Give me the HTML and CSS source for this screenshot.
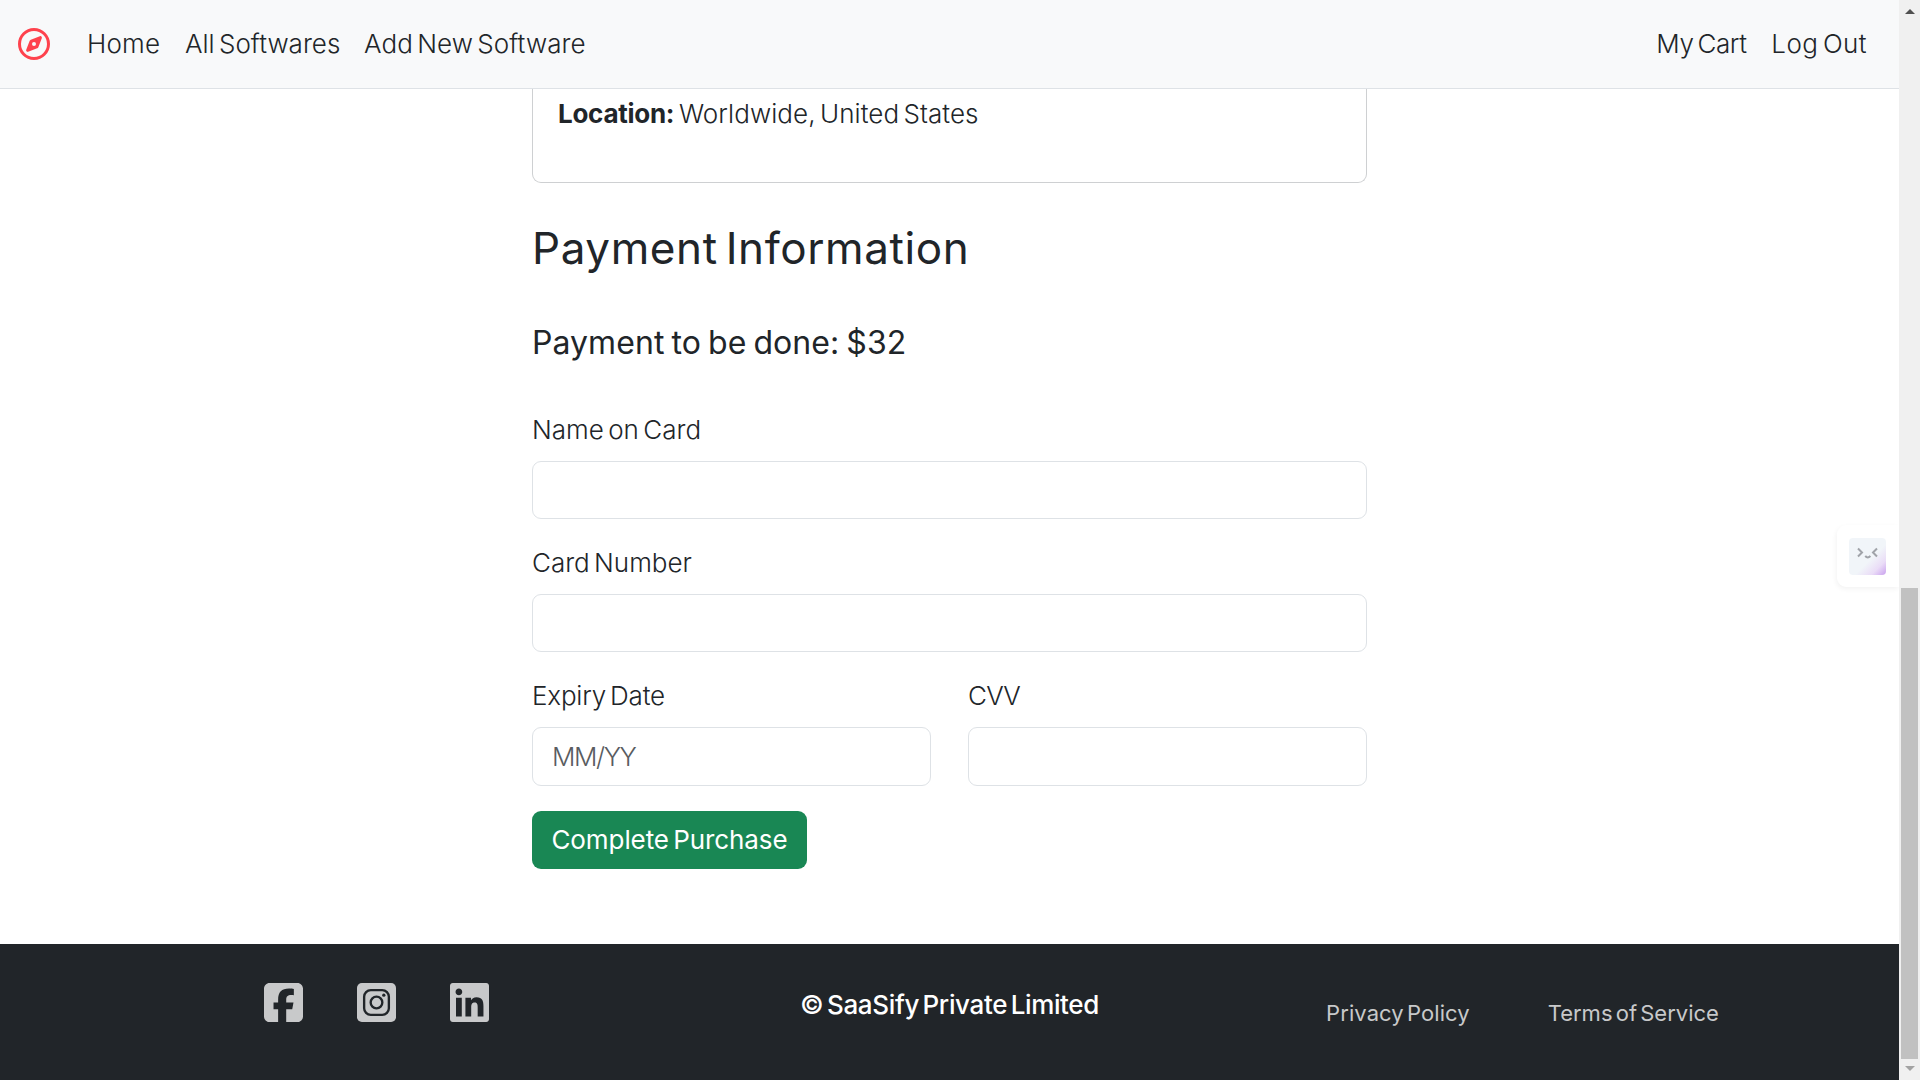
FILE: index.html
```html
<!DOCTYPE html>
<html lang="en">
<head>
<meta charset="utf-8">
<title>SaaSify</title>
<link rel="stylesheet" href="styles.css">
</head>
<body>
<div class="page">
  <header class="navbar">
    <a class="brand" aria-label="Home page">
      <svg viewBox="0 0 512 512"><path d="M464 256A208 208 0 1 0 48 256a208 208 0 1 0 416 0zM0 256a256 256 0 1 1 512 0A256 256 0 1 1 0 256zm306.7 69.1L162.4 380.6c-19.4 7.5-38.5-11.6-31-31l55.5-144.3c3.3-8.5 9.9-15.1 18.4-18.4l144.3-55.5c19.4-7.5 38.5 11.6 31 31L325.1 306.7c-3.2 8.5-9.9 15.1-18.4 18.4zM288 256a32 32 0 1 0-64 0 32 32 0 1 0 64 0z"/></svg>
    </a>
    <nav class="nav-main">
      <a class="nav-home">Home</a>
      <a class="nav-all">All Softwares</a>
      <a class="nav-add">Add New Software</a>
    </nav>
    <nav class="nav-user">
      <a class="nav-cart">My Cart</a>
      <a class="nav-logout">Log Out</a>
    </nav>
  </header>

  <main class="checkout">
    <section class="card"><b class="card-key">Location:</b><span class="card-value">Worldwide, United States</span></section>
    <h2 class="title">Payment Information</h2>
    <h4 class="amount">Payment to be done: $32</h4>
    <form class="form">
      <div class="field">
        <label class="label-name">Name on Card</label>
        <div class="input"></div>
      </div>
      <div class="field">
        <label class="label-number">Card Number</label>
        <div class="input"></div>
      </div>
      <div class="row">
        <div class="field">
          <label class="label-expiry">Expiry Date</label>
          <div class="input input-tall"><span class="placeholder">MM/YY</span></div>
        </div>
        <div class="field">
          <label class="label-cvv">CVV</label>
          <div class="input input-tall"></div>
        </div>
      </div>
      <button class="submit" type="button">Complete Purchase</button>
    </form>
  </main>

  <footer class="footer">
    <div class="social">
      <svg viewBox="0 32 448 448"><path d="M64 32C28.7 32 0 60.7 0 96V416c0 35.3 28.7 64 64 64h98.2V334.2H109.4V256h52.8V222.3c0-87.1 39.4-127.5 125-127.5c16.2 0 44.2 3.2 55.7 6.4V172c-6-.6-16.5-1-29.6-1c-42 0-58.2 15.9-58.2 57.2V256h83.6l-14.4 78.2H255V480H384c35.3 0 64-28.7 64-64V96c0-35.3-28.7-64-64-64H64z"/></svg>
      <svg viewBox="0 0 448 448"><rect width="448" height="448" rx="56"/><g class="cutout"><rect x="82" y="82" width="284" height="284" rx="76"/><circle cx="224" cy="224" r="67"/></g><circle class="cutout-dot" cx="308" cy="140" r="19"/></svg>
      <svg viewBox="0 32 448 448"><path d="M416 32H31.9C14.3 32 0 46.5 0 64.3v383.4C0 465.5 14.3 480 31.9 480H416c17.6 0 32-14.5 32-32.3V64.3c0-17.8-14.4-32.3-32-32.3zM135.4 416H69V202.2h66.5V416zm-33.2-243c-21.3 0-38.5-17.3-38.5-38.5S80.9 96 102.2 96c21.2 0 38.5 17.3 38.5 38.5 0 21.3-17.2 38.5-38.5 38.5zm282.1 243h-66.4V312c0-24.8-.5-56.7-34.5-56.7-34.6 0-39.9 27-39.9 54.9V416h-66.4V202.2h63.7v29.2h.9c8.9-16.8 30.6-34.5 62.9-34.5 67.2 0 79.7 44.3 79.7 101.9V416z"/></svg>
    </div>
    <div class="copyright">© SaaSify Private Limited</div>
    <div class="legal">
      <a class="privacy">Privacy Policy</a>
      <a class="terms">Terms of Service</a>
    </div>
  </footer>
</div>

<div class="scrollbar">
  <i class="arrow-up"></i>
  <i class="thumb"></i>
  <i class="arrow-down"></i>
</div>

<div class="assistant">
  <svg viewBox="0 0 37 37"><path d="M9 10.5l4 4-4 4M28 10.5l-4 4 4 4"/><path d="M16.2 18q2.6 2.8 5.2 0"/></svg>
</div>
</body>
</html>
```

FILE: styles.css
```css
* { box-sizing: border-box; }
body {
  margin: 0;
  width: 1920px;
  height: 1080px;
  overflow: hidden;
  display: flex;
  position: relative;
  background: #fff;
  color: #212529;
  font: 300 26px/39px Inter, "Liberation Sans", sans-serif;
  word-spacing: -3px;
}
.page { width: 1899px; height: 1080px; display: flex; flex-direction: column; }

/* Navigation */
.navbar {
  flex: none;
  height: 89px;
  display: flex;
  align-items: center;
  padding: 0 32px 1px 18px;
  background: #f8f9fa;
  border-bottom: 1px solid #dee2e6;
}
.brand { display: flex; width: 69px; }
.brand svg { width: 32px; height: 32px; fill: #fe424d; }
.nav-main, .nav-user { display: flex; }
.nav-main { flex: 1; }
.nav-home { width: 98px; letter-spacing: .2px; }
.nav-all { width: 179px; letter-spacing: 0; }
.nav-add { letter-spacing: .05px; }
.nav-cart { width: 115px; letter-spacing: -.4px; }
.nav-logout { letter-spacing: .4px; }

/* Checkout column */
.checkout { width: 835px; margin: 0 auto; flex: 1; }
.card {
  display: flex;
  height: 94px;
  padding: 5px 25px 0;
  border: 1px solid #ced0d2;
  border-top: 0;
  border-radius: 0 0 9px 9px;
}
.card-key { width: 121px; font-weight: 700; letter-spacing: -.27px; }
.card-value { letter-spacing: .07px; }
.title { margin: 39px 0 0; font-size: 44px; font-weight: 400; line-height: 52px; letter-spacing: .6px; word-spacing: -5px; }
.amount { margin: 50px 0 0; font-size: 32px; font-weight: 400; line-height: 38px; letter-spacing: .06px; word-spacing: -2px; }
.form { display: flex; flex-direction: column; gap: 24px; margin-top: 48px; }
.row { display: grid; grid-template-columns: 1fr 1fr; gap: 37px; }
.field { display: flex; flex-direction: column; gap: 12px; }
.input {
  display: flex;
  align-items: center;
  height: 58px;
  padding: 0 19px;
  border: 1px solid #dee2e6;
  border-radius: 9px;
}
.input-tall { height: 59px; }
.label-name { letter-spacing: .02px; }
.label-number { letter-spacing: 0; }
.label-expiry { letter-spacing: -.2px; }
.label-cvv { letter-spacing: -.8px; }
.placeholder { color: #595c5f; letter-spacing: -1.4px; }
.submit {
  align-self: flex-start;
  width: 275px;
  height: 58px;
  margin-top: 1px;
  padding: 0;
  border: 0;
  border-radius: 9px;
  background: #198754;
  color: #fff;
  font: 400 26px/58px Inter, "Liberation Sans", sans-serif;
  letter-spacing: -.08px;
  word-spacing: -3px;
}

/* Footer */
.footer {
  flex: none;
  height: 136px;
  display: grid;
  grid-template-columns: repeat(3, 573px);
  justify-content: center;
  justify-items: center;
  align-items: start;
  background: #212529;
}
.social { display: flex; gap: 54px; margin-top: 39px; }
.social svg { width: 39px; height: 39px; fill: #c8c9ca; }
.cutout { fill: none; stroke: #212529; stroke-width: 27; }
.cutout-dot { fill: #212529; }
.copyright { margin-top: 41px; color: #fff; font-weight: 500; letter-spacing: -.36px; }
.legal { display: flex; gap: 78px; margin-top: 53px; color: #c8c9ca; font-size: 22px; font-weight: 400; line-height: 32px; }
.privacy { letter-spacing: .07px; }
.terms { letter-spacing: 0; }

/* Scrollbar */
.scrollbar {
  width: 21px;
  height: 1080px;
  display: flex;
  flex-direction: column;
  align-items: center;
  padding: 9px 0;
  background: #f0f0f0;
}
.arrow-up { border: 5px solid transparent; border-top: 0; border-bottom-color: #505050; }
.thumb { width: 17px; height: 471px; margin-top: 574px; background: #c1c1c1; }
.arrow-down { margin-top: 7px; border: 5px solid transparent; border-bottom: 0; border-top-color: #a3a3a3; }

/* Floating assistant tab */
.assistant {
  position: absolute;
  right: 21px;
  top: 525px;
  width: 62px;
  height: 62px;
  padding: 13px 12px;
  border-radius: 9px 0 0 9px;
  background: #fff;
  box-shadow: -1px 2px 5px rgba(0, 0, 0, .05);
  clip-path: inset(-8px 0 -8px -8px);
}
.assistant svg {
  display: block;
  width: 37px;
  height: 37px;
  border-radius: 4px;
  background: linear-gradient(135deg, #f1f5f9 58%, #eadcf7 80%, #c9a0ee);
  fill: none;
  stroke: #a0a3a9;
  stroke-width: 2;
}
```
